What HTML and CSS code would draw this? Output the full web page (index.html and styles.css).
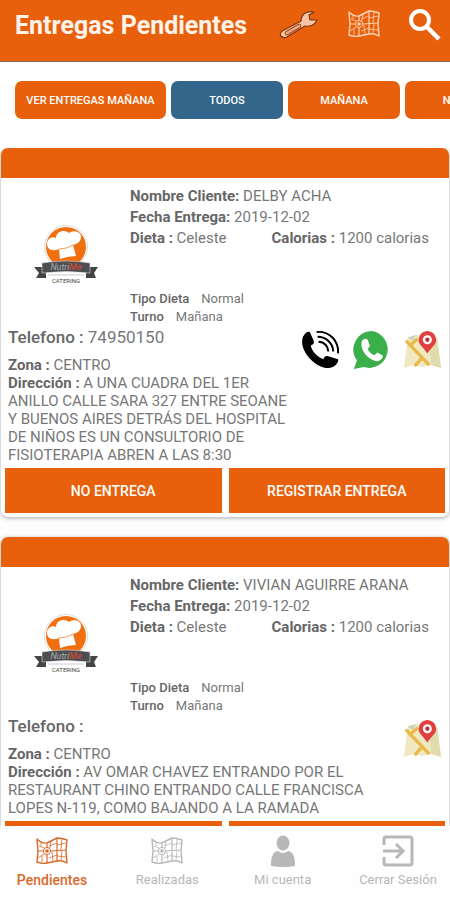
FILE: index.html
```html
<!DOCTYPE html>
<html lang="es">
<head>
  <meta charset="UTF-8">
  <meta name="viewport" content="width=device-width, initial-scale=1.0">
  <title>Entregas Pendientes</title>
  <link rel="stylesheet" href="styles.css">
</head>
<body>
  <!-- Shared icons -->
  <svg class="sprite" aria-hidden="true">
    <symbol id="icon-map" viewBox="0 0 34 30">
      <g fill="none" stroke="currentColor" stroke-linejoin="round">
        <path stroke-width="1.4" d="M2 3 Q7 8 12 7 L22 2 Q27 2 32 4 L31 15 L32 27 Q27 24 22 25 L12 27 Q7 28 2 26 L3 15 Z"/>
        <path stroke-width="1.2" d="M12 7 V12 M12 19 V27 M22 2 V25 M3 15 H8 M16 15 L31 14"/>
        <path stroke-width=".8" d="M4 10 L9 12 M6 6 L6 10 M16 5 L15 12 M14 10 L22 7 M22 9 L31 7 M27 3 L26 14 M17 16 L18 25 M3 22 L9 18 M14 22 L22 19 M22 20 L31 21 M27 15 L26 24 M7 20 L7 26"/>
        <circle cx="12" cy="15" r="3.6"/>
      </g>
      <circle cx="12" cy="15" r="1.8" fill="currentColor"/>
    </symbol>

    <symbol id="icon-place" viewBox="0 0 40 40">
      <path fill="#f0e8c0" d="M5 7 L14 5 L26 8 L35 8 L39 39 L29 36 L20 38 L11 36 L1 39 Z"/>
      <path fill="#e0dcae" d="M26 8 L35 8 L39 39 L29 36 Z"/>
      <path fill="#c9d2c0" d="M5 8 L13 5 L10 11 Z"/>
      <path fill="none" stroke="#e9b949" stroke-width="3.4" d="M3 11 L27 36 M6 17 L15 9 M12 37 L20 28"/>
      <path fill="#e04040" d="M25 24 C20 17 16 15 16 10 A9 9 0 0 1 34 10 C34 15 30 17 25 24 Z"/>
      <circle cx="25" cy="10" r="4.6" fill="#fff"/>
      <circle cx="25" cy="10" r="2.2" fill="#b53340"/>
    </symbol>

    <symbol id="logo-art" viewBox="0 0 64 60">
      <circle cx="32" cy="22" r="21.500" fill="#fff" stroke="#ddd" stroke-width="1"/>
      <circle cx="32" cy="22" r="20" fill="#f07010"/>
      <path fill="#fff" d="M26 34 L25 24 C18 27 13 24 13 19 C13 14 18 11 22 13 C22 6 31 4 35 8 C40 4 48 7 47 13 C46 18 42 19 39 20 L42 31 Q34 31 26 34 Z"/>
      <path fill="none" stroke="#f07010" stroke-width=".7" d="M25 24 Q33 24 39 20"/>
      <path fill="#444" d="M0 42 L12 42 L12 53 L2 53 L5 48 Z M52 42 L64 42 L60 48 L62 53 L52 53 Z"/>
      <path fill="#4d4e52" stroke="#ddd" stroke-width=".6" d="M8 38 Q32 34 56 38 L56 48 Q32 45 8 48 Z"/>
      <path fill="none" stroke="#aaa" stroke-width=".6" d="M14 50 H50"/>
    </symbol>
  </svg>

  <div class="app">
    <header class="topbar">
      <h1>Entregas Pendientes</h1>
      <button class="icon-btn" aria-label="Herramientas">
        <svg width="40" height="32" viewBox="0 0 40 32">
          <path fill="#f6c4a4" stroke="#7d3310" stroke-width="1.2" stroke-linejoin="round" d="M3 22 L22 12 C22 6 27 1 35 3 L30 6 L31 11 L38 11 C36 16 31 18 26 17 L8 28 C3 30 -1 26 3 22 Z"/>
          <path fill="none" stroke="#a04a1c" stroke-width="4.600" stroke-linecap="round" d="M8 24 L20 17"/>
          <path fill="none" stroke="#f0a880" stroke-width="2.600" stroke-linecap="round" d="M8 24 L20 17"/>
        </svg>
      </button>
      <button class="icon-btn map-btn" aria-label="Mapa">
        <svg width="34" height="30"><use href="#icon-map"/></svg>
      </button>
      <button class="icon-btn" aria-label="Buscar">
        <svg width="32" height="32" viewBox="0 0 32 32" fill="none" stroke="#fff">
          <circle cx="11" cy="11" r="9" stroke-width="4"/>
          <path stroke-width="4.500" d="M18 18 L30 30"/>
        </svg>
      </button>
    </header>

    <nav class="filters" aria-label="Turnos">
      <button class="chip chip-wide">VER ENTREGAS MAÑANA</button>
      <button class="chip active">TODOS</button>
      <button class="chip">MAÑANA</button>
      <button class="chip">NOCHE</button>
    </nav>

    <main class="deliveries">
      <article class="card">
        <div class="card-bar"></div>
        <div class="summary">
          <svg class="logo" viewBox="0 0 64 60">
            <use href="#logo-art"/>
            <text x="32" y="45" class="logo-name">Nutri<tspan class="logo-name-end">Me</tspan></text>
            <text x="32" y="58" class="logo-sub">CATERING</text>
          </svg>
          <div>
            <p><b>Nombre Cliente:</b> DELBY ACHA</p>
            <p><b>Fecha Entrega:</b> 2019-12-02</p>
            <p class="diet"><span><b>Dieta :</b> Celeste</span><span><b>Calorias :</b> 1200 calorias</span></p>
            <dl class="extra">
              <div><dt>Tipo Dieta</dt><dd>Normal</dd></div>
              <div><dt>Turno</dt><dd>Mañana</dd></div>
            </dl>
          </div>
        </div>
        <div class="details">
          <div class="address">
            <p class="phone"><b>Telefono :</b> 74950150</p>
            <p><b>Zona :</b> CENTRO</p>
            <p><b>Dirección :</b> A UNA CUADRA DEL 1ER ANILLO CALLE SARA 327 ENTRE SEOANE Y BUENOS AIRES DETRÁS DEL HOSPITAL DE NIÑOS ES UN CONSULTORIO DE FISIOTERAPIA ABREN A LAS 8:30</p>
          </div>
          <div class="contact">
            <a href="#" aria-label="Llamar">
              <svg viewBox="0 0 40 40">
                <path d="M2 7 C4 3 7 1 9 2 L13 11 C14 14 12 15 10 16 C11 22 17 28 23 30 C24 27 26 26 28 27 L38 30 C39 33 35 38 29 39 C15 40 -3 21 2 7 Z"/>
                <g fill="none" stroke="#000" stroke-width="2">
                  <path d="M16 2 C29 1 39 11 38 24"/>
                  <path d="M17 7 C26 7 33 14 33 22"/>
                  <path d="M18 12 C24 12 28 17 28 22"/>
                </g>
              </svg>
            </a>
            <a href="#" aria-label="WhatsApp">
              <svg viewBox="0 0 40 40">
                <path fill="#3bb04a" d="M20 1 A19 19 0 1 1 12 38 L2 40 L5 31 A19 19 0 0 1 20 1 Z"/>
                <path fill="#fff" d="M10 12 C11 9 14 8 16 10 L18 15 C19 17 17 18 16 19 C17 22 20 25 23 26 L26 23 L31 26 C33 28 29 32 26 32 C17 31 8 21 10 12 Z"/>
              </svg>
            </a>
            <a href="#" aria-label="Ubicación"><svg><use href="#icon-place"/></svg></a>
          </div>
        </div>
        <div class="actions">
          <button>NO ENTREGA</button>
          <button>REGISTRAR ENTREGA</button>
        </div>
      </article>

      <article class="card">
        <div class="card-bar"></div>
        <div class="summary">
          <svg class="logo" viewBox="0 0 64 60">
            <use href="#logo-art"/>
            <text x="32" y="45" class="logo-name">Nutri<tspan class="logo-name-end">Me</tspan></text>
            <text x="32" y="58" class="logo-sub">CATERING</text>
          </svg>
          <div>
            <p><b>Nombre Cliente:</b> VIVIAN AGUIRRE ARANA</p>
            <p><b>Fecha Entrega:</b> 2019-12-02</p>
            <p class="diet"><span><b>Dieta :</b> Celeste</span><span><b>Calorias :</b> 1200 calorias</span></p>
            <dl class="extra">
              <div><dt>Tipo Dieta</dt><dd>Normal</dd></div>
              <div><dt>Turno</dt><dd>Mañana</dd></div>
            </dl>
          </div>
        </div>
        <div class="details">
          <div class="address">
            <p class="phone"><b>Telefono :</b></p>
            <p><b>Zona :</b> CENTRO</p>
            <p><b>Dirección :</b> AV OMAR CHAVEZ ENTRANDO POR EL RESTAURANT CHINO ENTRANDO CALLE FRANCISCA LOPES N-119, COMO BAJANDO A LA RAMADA</p>
          </div>
          <div class="contact">
            <a href="#" aria-label="Ubicación"><svg><use href="#icon-place"/></svg></a>
          </div>
        </div>
        <div class="actions">
          <button>NO ENTREGA</button>
          <button>REGISTRAR ENTREGA</button>
        </div>
      </article>
    </main>

    <nav class="tabbar">
      <a href="#" class="current">
        <svg viewBox="0 0 34 30"><use href="#icon-map"/></svg>
        Pendientes
      </a>
      <a href="#">
        <svg viewBox="0 0 34 30"><use href="#icon-map"/></svg>
        Realizadas
      </a>
      <a href="#">
        <svg viewBox="0 0 34 32" fill="#b8b8b8">
          <ellipse cx="17" cy="8" rx="6.500" ry="7.500"/>
          <path d="M5 31 C5 21 7 17 12 16 Q17 20 22 16 C27 17 29 21 29 31 Q17 33 5 31 Z"/>
        </svg>
        Mi cuenta
      </a>
      <a href="#">
        <svg viewBox="0 0 34 32" fill="none" stroke="#b8b8b8" stroke-width="3">
          <path d="M3 10 V4 Q3 2 5 2 H29 Q31 2 31 4 V28 Q31 30 29 30 H5 Q3 30 3 28 V22"/>
          <path d="M2 16 H21 M15 9 L22 16 L15 23"/>
        </svg>
        Cerrar Sesión
      </a>
    </nav>
  </div>
</body>
</html>
```
FILE: styles.css
```css
* {
  box-sizing: border-box;
}

body {
  margin: 0;
  font-family: Roboto, "Liberation Sans", sans-serif;
  color: #777;
  background: #fefefe;
}

p, h1, dl, dd {
  margin: 0;
}

b, dt {
  font-weight: 700;
  color: #666;
}

button {
  border: none;
  font-family: inherit;
  color: #fff;
  background: #e8600c;
  cursor: pointer;
}

.sprite {
  position: absolute;
  width: 0;
  height: 0;
}

.app {
  display: flex;
  flex-direction: column;
  height: 100vh;
}

/* Header */
.topbar {
  display: flex;
  align-items: flex-start;
  height: 62px;
  padding: 9px 9px 0 15px;
  background: #e8600c;
  border-bottom: 1px solid #8b6a55;
  flex-shrink: 0;
}

.topbar h1 {
  flex: 1;
  font-size: 25px;
  line-height: 34px;
  font-weight: 700;
  color: #fff3ea;
  white-space: nowrap;
}

.icon-btn {
  padding: 0;
  margin-left: 28px;
  background: none;
}

.icon-btn svg {
  display: block;
}

.map-btn {
  color: #fbd3b4;
}

/* Filter chips */
.filters {
  display: flex;
  gap: 5px;
  padding: 19px 0 29px 15px;
  overflow: hidden;
  flex-shrink: 0;
}

.chip {
  flex: 0 0 112px;
  height: 38px;
  padding: 0;
  border-radius: 7px;
  font-size: 11px;
  font-weight: 500;
}

.chip-wide {
  flex-basis: 151px;
}

.chip.active {
  background: #34668c;
}

/* Delivery cards */
.deliveries {
  flex: 1;
  min-height: 0;
  overflow-y: auto;
  scrollbar-width: none;
  padding: 0 1px;
}

.card {
  margin-bottom: 20px;
  padding-bottom: 4px;
  background: #fff;
  border-radius: 7px;
  box-shadow: 0 1px 4px rgba(0, 0, 0, 0.35);
  font-size: 15px;
  line-height: 18px;
}

.card-bar {
  height: 30px;
  background: #e8600c;
  border-radius: 7px 7px 0 0;
}

.summary {
  display: grid;
  grid-template-columns: 129px 1fr;
  padding-top: 8px;
  line-height: 21px;
}

.logo {
  width: 64px;
  height: 60px;
  margin: 39px 0 0 33px;
}

.logo-name {
  font-size: 9px;
  font-style: italic;
  text-anchor: middle;
  fill: #aaa;
}

.logo-name-end {
  fill: #e04a2a;
}

.logo-sub {
  font-size: 6px;
  text-anchor: middle;
  fill: #444;
}

.diet {
  display: flex;
  justify-content: space-between;
  padding-right: 20px;
}

.extra {
  margin-top: 41px;
  font-size: 13px;
  line-height: 18px;
}

.extra div {
  display: flex;
  gap: 12px;
}

.extra dt {
  font-weight: 500;
}

.details {
  display: flex;
  gap: 8px;
  padding: 0 7px;
}

.address {
  flex: 1;
}

.phone {
  margin-bottom: 8px;
  font-size: 17px;
  line-height: 22px;
}

.phone b {
  font-weight: 500;
}

.contact {
  display: flex;
  gap: 12px;
  padding-top: 4px;
}

.contact svg {
  display: block;
  width: 39px;
  height: 39px;
}

.actions {
  display: flex;
  gap: 7px;
  padding: 4px 4px 0;
}

.actions button {
  flex: 1;
  height: 45px;
  padding: 0;
  font-size: 14px;
  font-weight: 500;
}

/* Bottom navigation */
.tabbar {
  display: flex;
  justify-content: space-between;
  height: 74px;
  padding: 9px 14px 0;
  background: #fefefe;
  flex-shrink: 0;
}

.tabbar a {
  display: flex;
  flex-direction: column;
  align-items: center;
  gap: 4px;
  width: 76px;
  font-size: 13px;
  line-height: 18px;
  color: #b8b8b8;
  text-decoration: none;
  white-space: nowrap;
}

.tabbar svg {
  width: 34px;
  height: 32px;
}

.tabbar .current {
  color: #d9692a;
  font-size: 14px;
  font-weight: 500;
}
```
